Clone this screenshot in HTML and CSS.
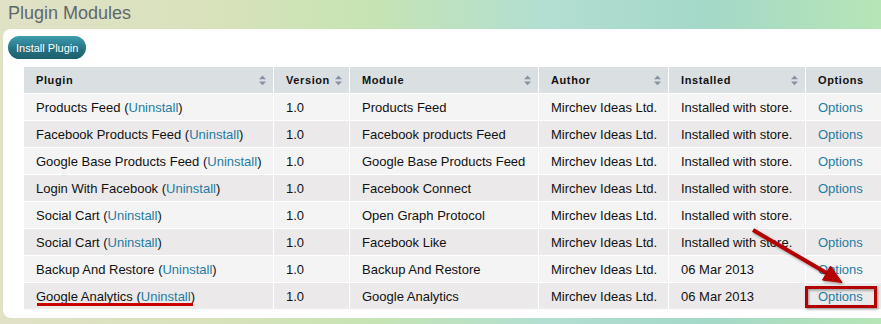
FILE: index.html
```html
<!DOCTYPE html>
<html lang="en">
<head>
  <meta charset="UTF-8">
  <title>Plugin Modules</title>
  <link rel="stylesheet" href="styles.css">
</head>
<body>

  <h1 class="page-title">Plugin Modules</h1>

  <div class="panel">
    <button class="btn-install">Install Plugin</button>

    <table class="grid">
      <colgroup>
        <col class="c-plugin">
        <col class="c-version">
        <col class="c-module">
        <col class="c-author">
        <col class="c-installed">
        <col class="c-options">
      </colgroup>
      <thead>
        <tr>
          <th><div class="th-in"><span>Plugin</span><svg class="sort" viewBox="0 0 7 11"><path d="M0 4.2 L3.5 0.5 L7 4.2Z M0 6.5 L7 6.5 L3.5 10.2Z"/></svg></div></th>
          <th><div class="th-in"><span>Version</span><svg class="sort" viewBox="0 0 7 11"><path d="M0 4.2 L3.5 0.5 L7 4.2Z M0 6.5 L7 6.5 L3.5 10.2Z"/></svg></div></th>
          <th><div class="th-in"><span>Module</span><svg class="sort" viewBox="0 0 7 11"><path d="M0 4.2 L3.5 0.5 L7 4.2Z M0 6.5 L7 6.5 L3.5 10.2Z"/></svg></div></th>
          <th><div class="th-in"><span>Author</span><svg class="sort" viewBox="0 0 7 11"><path d="M0 4.2 L3.5 0.5 L7 4.2Z M0 6.5 L7 6.5 L3.5 10.2Z"/></svg></div></th>
          <th><div class="th-in"><span>Installed</span><svg class="sort" viewBox="0 0 7 11"><path d="M0 4.2 L3.5 0.5 L7 4.2Z M0 6.5 L7 6.5 L3.5 10.2Z"/></svg></div></th>
          <th><div class="th-in"><span>Options</span></div></th>
        </tr>
      </thead>
      <tbody>
        <tr>
          <td>Products Feed (<a href="#">Uninstall</a>)</td>
          <td>1.0</td>
          <td>Products Feed</td>
          <td>Mirchev Ideas Ltd.</td>
          <td>Installed with store.</td>
          <td><a href="#">Options</a></td>
        </tr>
        <tr>
          <td>Facebook Products Feed (<a href="#">Uninstall</a>)</td>
          <td>1.0</td>
          <td>Facebook products Feed</td>
          <td>Mirchev Ideas Ltd.</td>
          <td>Installed with store.</td>
          <td><a href="#">Options</a></td>
        </tr>
        <tr>
          <td>Google Base Products Feed (<a href="#">Uninstall</a>)</td>
          <td>1.0</td>
          <td>Google Base Products Feed</td>
          <td>Mirchev Ideas Ltd.</td>
          <td>Installed with store.</td>
          <td><a href="#">Options</a></td>
        </tr>
        <tr>
          <td>Login With Facebook (<a href="#">Uninstall</a>)</td>
          <td>1.0</td>
          <td>Facebook Connect</td>
          <td>Mirchev Ideas Ltd.</td>
          <td>Installed with store.</td>
          <td><a href="#">Options</a></td>
        </tr>
        <tr>
          <td>Social Cart (<a href="#">Uninstall</a>)</td>
          <td>1.0</td>
          <td>Open Graph Protocol</td>
          <td>Mirchev Ideas Ltd.</td>
          <td>Installed with store.</td>
          <td></td>
        </tr>
        <tr>
          <td>Social Cart (<a href="#">Uninstall</a>)</td>
          <td>1.0</td>
          <td>Facebook Like</td>
          <td>Mirchev Ideas Ltd.</td>
          <td>Installed with store.</td>
          <td><a href="#">Options</a></td>
        </tr>
        <tr>
          <td>Backup And Restore (<a href="#">Uninstall</a>)</td>
          <td>1.0</td>
          <td>Backup And Restore</td>
          <td>Mirchev Ideas Ltd.</td>
          <td>06 Mar 2013</td>
          <td><a href="#">Options</a></td>
        </tr>
        <tr>
          <td>Google Analytics (<a href="#">Uninstall</a>)</td>
          <td>1.0</td>
          <td>Google Analytics</td>
          <td>Mirchev Ideas Ltd.</td>
          <td>06 Mar 2013</td>
          <td><a href="#">Options</a></td>
        </tr>
      </tbody>
    </table>
  </div>

  <!-- red annotations drawn on top of the screenshot -->
  <svg class="marks" width="881" height="324" viewBox="0 0 881 324">
    <defs>
      <filter id="shade" x="-20%" y="-20%" width="140%" height="140%">
        <feDropShadow dx="1" dy="1.5" stdDeviation="1.2" flood-color="#000" flood-opacity="0.35"/>
      </filter>
    </defs>
    <rect x="37" y="303" width="156" height="3" fill="#c80000"/>
    <g filter="url(#shade)" fill="#b30000" stroke="#b30000">
      <line x1="753" y1="230" x2="830" y2="275" stroke-width="4"/>
      <path d="M842 282.5 L822.5 280 L830.5 266Z" stroke-width="1"/>
      <rect x="806.5" y="287.5" width="69" height="19" fill="none" stroke-width="3"/>
    </g>
  </svg>

</body>
</html>
```

FILE: styles.css
```css
html, body {
  margin: 0;
  height: 100%;
}

body {
  font-family: 'Liberation Sans', Arial, sans-serif;
  font-size: 13px;
  color: #111;
  overflow: hidden;
  position: relative;
  background: linear-gradient(90deg, #e1e1c6 0%, #d8e2bb 25%, #c6e4b3 42%, #b2dfd2 62%, #a4d8c8 80%, #b6e6b6 100%);
}

.page-title {
  margin: 0;
  padding-left: 8px;
  height: 29px;
  font-size: 18px;
  font-weight: normal;
  line-height: 27px;
  color: #5f686d;
}

.panel {
  margin-left: 3px;
  width: 910px;
  padding: 7px 0 8px 5px;
  background-color: #fff;
  border-radius: 8px 0 0 8px;
}

.btn-install {
  display: block;
  height: 23px;
  padding: 0 8px;
  border: none;
  border-radius: 12px;
  font-family: 'Liberation Sans', Arial, sans-serif;
  font-size: 11px;
  color: #fff;
  background: linear-gradient(#3f9cb1, #24707f 60%, #1c5f6c);
  cursor: pointer;
}

.grid {
  margin: 8px 0 0 16px;
  border-collapse: separate;
  border-spacing: 0;
  table-layout: fixed;
  width: 862px;
}

.c-plugin { width: 250px; }
.c-version { width: 76px; }
.c-module { width: 189px; }
.c-author { width: 130px; }
.c-installed { width: 137px; }
.c-options { width: 80px; }

.grid th,
.grid td {
  height: 26px;
  padding: 0 0 0 12px;
  border-right: 1px solid #fff;
  border-bottom: 1px solid #fff;
  text-align: left;
  white-space: nowrap;
  box-sizing: border-box;
}

.grid th {
  height: 27px;
  padding-right: 7px;
  background-color: #dadfe2;
  font-size: 11px;
  font-weight: bold;
  letter-spacing: 0.6px;
  color: #111;
}

.th-in {
  display: flex;
  justify-content: space-between;
  align-items: center;
}

.sort {
  width: 7px;
  height: 11px;
  fill: #8592a3;
}

.grid td {
  height: 27px;
}

.grid tbody tr:nth-child(odd) td {
  background-color: #f4f4f4;
}

.grid tbody tr:nth-child(even) td {
  background-color: #ebe9e9;
}

.grid a {
  color: #1f7ca3;
  text-decoration: none;
}

.marks {
  position: absolute;
  left: 0;
  top: 0;
  pointer-events: none;
}
```
